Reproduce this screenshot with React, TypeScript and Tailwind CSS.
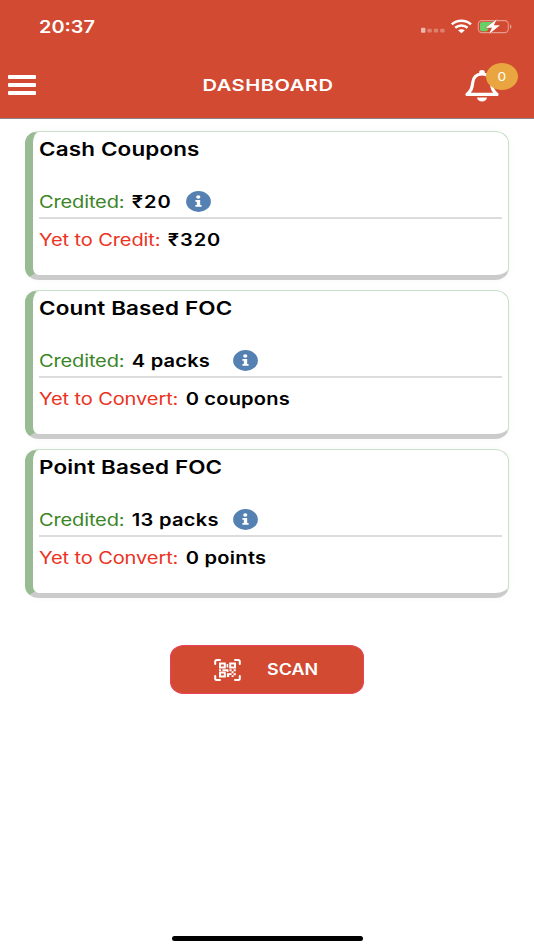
type CardData = {
  title: string
  credited: string
  pendingLabel: string
  pending: string
  slot: string
  tracking: string
}

const cards: CardData[] = [
  { title: "Cash Coupons", credited: "₹20", pendingLabel: "Yet to Credit:", pending: "₹320", slot: "w-[147px]", tracking: "tracking-[0.045em]" },
  { title: "Count Based FOC", credited: "4 packs", pendingLabel: "Yet to Convert:", pending: "0 coupons", slot: "w-[194px]", tracking: "tracking-[0.01em]" },
  { title: "Point Based FOC", credited: "13 packs", pendingLabel: "Yet to Convert:", pending: "0 points", slot: "w-[194px]", tracking: "tracking-[0.014em]" },
]

function StatusIcons() {
  return (
    <svg className="h-6 w-[100px]" viewBox="0 0 100 24" fill="none">
      <g fill="#fff">
        <rect x="5" y="13.8" width="4.4" height="5" rx="0.8" opacity="0.6" />
        <rect x="11.4" y="14.8" width="4.4" height="3.8" rx="1" opacity="0.3" />
        <rect x="17.8" y="14.8" width="4.4" height="3.8" rx="1" opacity="0.3" />
        <rect x="24.2" y="14.8" width="4.4" height="3.8" rx="1" opacity="0.3" />
      </g>
      <g stroke="#fff" strokeWidth="2.5">
        <path d="M35.8 10.4C41.2 5.6 49.6 5.6 55 10.4" />
        <path d="M39.2 13.8C42.8 10.8 48 10.8 51.6 13.8" />
      </g>
      <path d="M42 16.3C44 14.8 46.8 14.8 48.8 16.3L45.4 19.2Z" fill="#fff" />
      <rect x="62.3" y="6.6" width="30" height="12" rx="3.6" stroke="#fff" strokeOpacity="0.45" strokeWidth="1.1" />
      <path d="M94 10.4C95.8 10.9 95.8 14.3 94 14.8Z" fill="#fff" fillOpacity="0.5" />
      <path d="M66 8H76L71 17.3H66Q64 17.3 64 15.3V10Q64 8 66 8Z" fill="#65d166" />
      <path d="M80.8 5.2L69.6 13.8H76L73 20L84 11.2H77.8Z" fill="#fff" stroke="#d14a31" strokeWidth="0.8" paintOrder="stroke" />
    </svg>
  )
}

function InfoIcon() {
  return (
    <svg className="h-[21px] w-[25px]" viewBox="0 0 21 21" preserveAspectRatio="none">
      <circle cx="10.5" cy="10.5" r="10.4" fill="#5481b2" />
      <circle cx="10.3" cy="6" r="1.8" fill="#fff" />
      <path d="M7.9 9H11.9V14H13.1V15.7H7.9V14H9.1V10.7H7.9Z" fill="#fff" />
    </svg>
  )
}

function BellIcon() {
  return (
    <svg className="h-8 w-[34px]" viewBox="0 0 34 32" fill="none">
      <path d="M2 24.4C6.4 20.4 7 18.4 7.6 13.2C8.2 7.2 11.8 4 17 4C22.2 4 25.8 7.2 26.4 13.2C27 18.4 27.6 20.4 32 24.4Z" stroke="#fff" strokeWidth="3.2" strokeLinejoin="round" />
      <ellipse cx="17" cy="2.4" rx="2.8" ry="2.4" fill="#fff" />
      <path d="M12 27.6H22C21.4 32.8 12.6 32.8 12 27.6Z" fill="#fff" />
    </svg>
  )
}

function QrIcon() {
  return (
    <svg className="h-[22px] w-[27px]" viewBox="0 0 27 22" fill="none">
      <g stroke="#fff" strokeWidth="2" strokeLinecap="round" strokeLinejoin="round">
        <path d="M1.2 5V2.5Q1.2 1 3 1H6M21 1H24Q25.8 1 25.8 2.5V5M25.8 17V19.5Q25.8 21 24 21H21M6 21H3Q1.2 21 1.2 19.5V17" />
      </g>
      <g stroke="#fff" strokeWidth="2">
        <path d="M6 4.6H10.8V8.4H6ZM16.2 4.6H21V8.4H16.2ZM6 13.6H10.8V17.4H6Z" />
      </g>
      <path d="M12.6 5H14.2V8.6H12.6ZM5 10.3H7V12H5ZM8.5 10.2H14.4V13H12.6V12H8.5ZM15.5 10.3H17.6V12.2H15.5ZM19.6 10.3H21.8V12.2H19.6ZM17.6 12.2H19.6V14.2H17.6ZM13 14.2H17.6V16H15.2V18H12.8ZM19.6 14.2H21.8V16.2H19.6ZM17.6 16.2H19.6V18H17.6Z" fill="#fff" />
    </svg>
  )
}

function Card({ card }: { card: CardData }) {
  return (
    <section className="h-[149px] rounded-[14px/12px] border-t border-r border-b-[5px] border-l-8 border-t-[#c8dfc8] border-r-[#c8dfc8] border-b-[#cbcbcb] border-l-[#99bb94] bg-white pr-[6px] pl-[6px] whitespace-nowrap shadow-[0_0_8px_rgba(0,0,0,0.03)]">
      <h2 className="mt-[6px] h-6 w-max origin-left scale-x-[1.2] text-[18.7px] leading-6 font-semibold tracking-[0.007em]">{card.title}</h2>
      <div className="mt-6 flex h-[33px] items-center border-b-2 border-[#dcdcdc]">
        <div className={card.slot}>
          <p className="w-max origin-left scale-x-[1.18] pt-px text-[17px] leading-6">
            <span className="tracking-[-0.008em] text-[#3b8526]">Credited:</span> <b className={`ml-[1.5px] font-semibold ${card.tracking}`}>{card.credited}</b>
          </p>
        </div>
        <InfoIcon />
      </div>
      <p className="mt-[9px] w-max origin-left scale-x-[1.18] text-[17px] leading-6">
        <span className="tracking-[-0.006em] text-[#eb3223]">{card.pendingLabel}</span> <b className={`ml-[1.5px] font-semibold ${card.tracking}`}>{card.pending}</b>
      </p>
    </section>
  )
}

export default function App() {
  return (
    <div className="flex h-[950px] w-[534px] flex-col bg-white font-['Inter',sans-serif] text-black">
      <header className="h-[119px] border-b border-[#8b8583] bg-[#d14a31] text-white">
        <div className="flex h-[52px] items-end justify-between pr-[18px] pl-[39px]">
          <span className="mb-[13px] w-max origin-left scale-x-[1.17] text-[17px] leading-6 font-semibold">20:37</span>
          <div className="mb-[14px]">
            <StatusIcons />
          </div>
        </div>
        <div className="grid h-[66px] grid-cols-[1fr_auto_1fr] items-center">
          <button className="ml-2 flex w-[28px] flex-col gap-1">
            <span className="h-[4px] rounded-[1px] bg-white" />
            <span className="h-[4px] rounded-[1px] bg-white" />
            <span className="h-[4px] rounded-[1px] bg-white" />
          </button>
          <h1 className="scale-x-[1.22] pl-[2px] text-[16.5px] leading-6 font-semibold tracking-[0.025em]">DASHBOARD</h1>
          <button className="relative mt-[2px] mr-[35px] justify-self-end">
            <BellIcon />
            <span className="absolute -top-[7px] left-[20.5px] flex h-[27px] w-8 items-center justify-center rounded-[50%] bg-[#e9a640] text-[12px]">
              <span className="scale-x-[1.15]">0</span>
            </span>
          </button>
        </div>
      </header>

      <main className="flex flex-1 flex-col gap-[10px] pt-[12px] pr-[25px] pl-[25px]">
        {cards.map((card) => (
          <Card key={card.title} card={card} />
        ))}
        <button className="mt-[37px] flex h-[49px] w-[194px] items-center self-center rounded-[14px/12px] border border-[#e8435a] bg-[#d14a31] pl-[43px] text-white">
          <QrIcon />
          <span className="ml-[26px] w-max origin-left scale-x-[1.17] pt-px text-[15.3px] leading-6 font-semibold">SCAN</span>
        </button>
      </main>

      <footer className="flex justify-center pb-[9px]">
        <div className="h-[5px] w-[191px] rounded-full bg-black" />
      </footer>
    </div>
  )
}
